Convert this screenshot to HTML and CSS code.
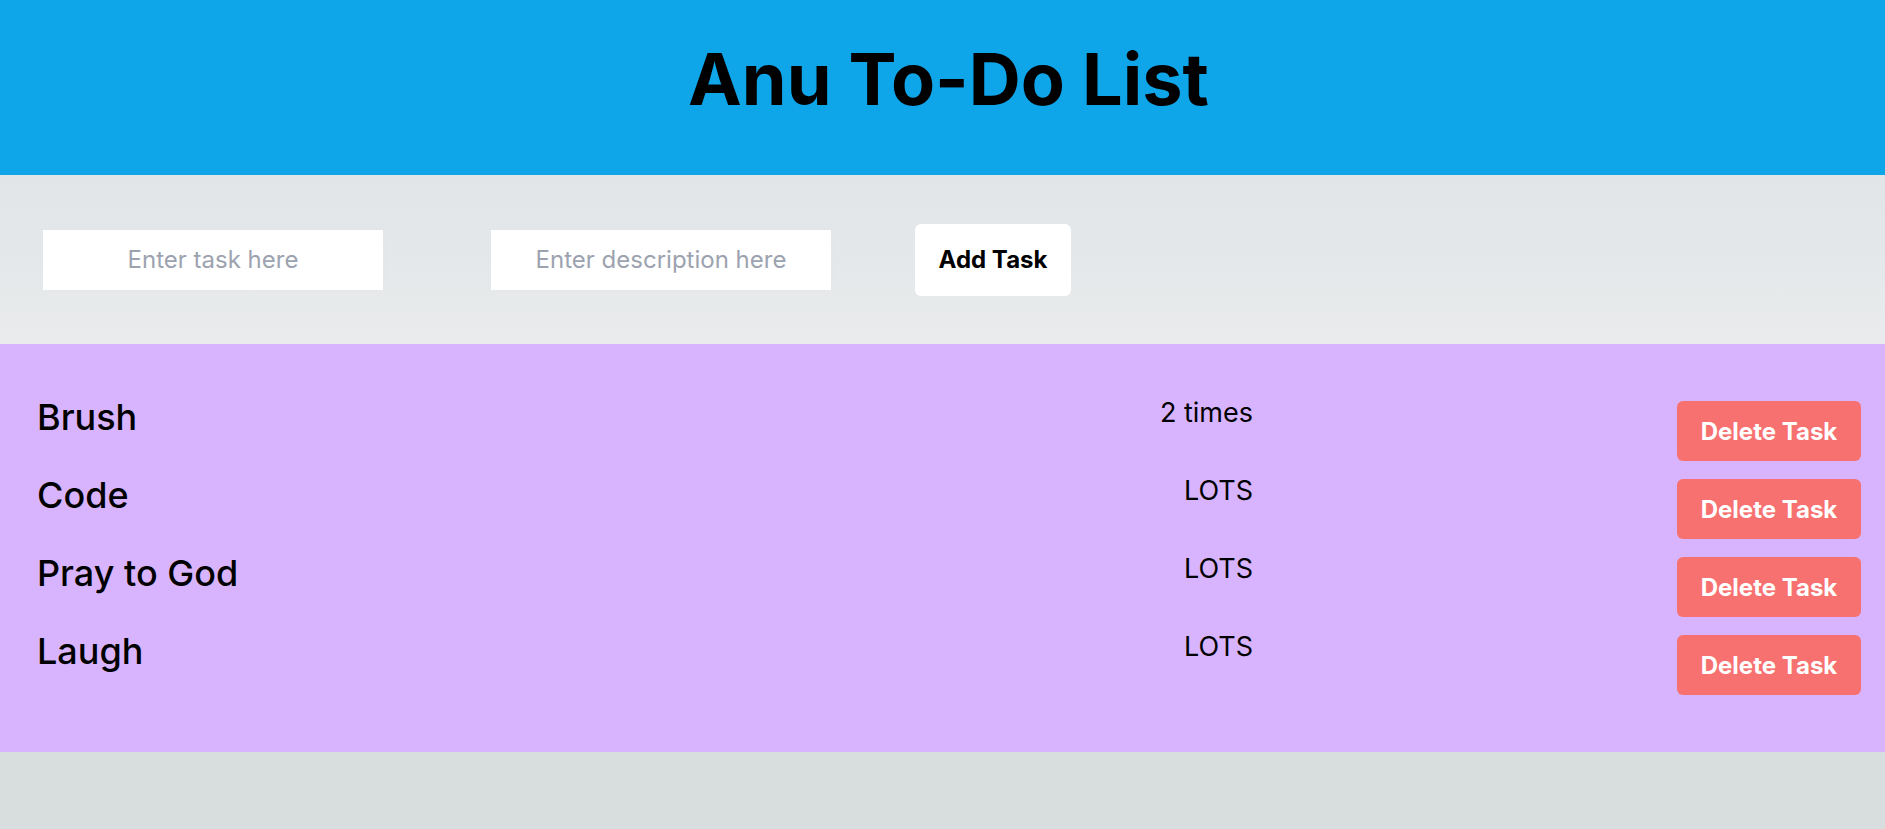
FILE: index.html
```html
<!DOCTYPE html>
<html lang="en">
<head>
<meta charset="utf-8">
<title>Anu To-Do List</title>
<link rel="stylesheet" href="styles.css">
</head>
<body>
<header class="header">
  <h1 class="title">Anu To-Do List</h1>
</header>
<section class="form-bar">
  <input class="field field-task" type="text" placeholder="Enter task here">
  <input class="field field-desc" type="text" placeholder="Enter description here">
  <button class="add-btn" type="button">Add Task</button>
</section>
<section class="list">
  <div class="row">
    <div class="task-title">Brush</div>
    <div class="task-desc">2 times</div>
    <div class="task-action"><button class="del-btn" type="button">Delete Task</button></div>
  </div>
  <div class="row">
    <div class="task-title">Code</div>
    <div class="task-desc">LOTS</div>
    <div class="task-action"><button class="del-btn" type="button">Delete Task</button></div>
  </div>
  <div class="row">
    <div class="task-title">Pray to God</div>
    <div class="task-desc">LOTS</div>
    <div class="task-action"><button class="del-btn" type="button">Delete Task</button></div>
  </div>
  <div class="row">
    <div class="task-title">Laugh</div>
    <div class="task-desc">LOTS</div>
    <div class="task-action"><button class="del-btn" type="button">Delete Task</button></div>
  </div>
</section>
</body>
</html>
```
FILE: styles.css
```css
* { box-sizing: border-box; }
html, body {
  margin: 0;
  padding: 0;
}
body {
  font-family: Inter, "Noto Sans", sans-serif;
  background: #d8dddd;
  color: #000;
  min-height: 829px;
}
.header {
  background: #0ea5e9;
  height: 175px;
  padding-top: 43px;
  padding-left: 12px;
}
.title {
  margin: 0;
  text-align: center;
  font-size: 72px;
  line-height: 72px;
  font-weight: 700;
}
.form-bar {
  height: 169px;
  display: flex;
  align-items: center;
  padding-left: 43px;
  background: linear-gradient(#e1e5e8, #e9ebec);
}
.field {
  width: 340px;
  height: 60px;
  border: none;
  outline: none;
  background: #fff;
  text-align: center;
  font-family: Inter, sans-serif;
  font-size: 24px;
  color: #111;
  box-shadow: 0 0 8px rgba(0, 0, 0, 0.015);
}
.field::placeholder { color: #9ca3af; }
.field-task { margin-right: 108px; }
.field-desc { margin-right: 84px; }
.add-btn {
  width: 156px;
  height: 72px;
  border: none;
  border-radius: 6px;
  background: #fff;
  font-family: Inter, sans-serif;
  font-size: 24px;
  font-weight: 700;
  color: #000;
  padding: 0;
}
.list {
  background: #d8b4fe;
  padding: 57px 24px 57px 37px;
  display: flex;
  flex-direction: column;
  gap: 18px;
}
.row {
  display: grid;
  grid-template-columns: 1fr 1fr 1fr;
  align-items: start;
  height: 60px;
}
.task-title {
  font-size: 36px;
  font-weight: 500;
  line-height: 30px;
  margin-top: 1px;
}
.task-desc {
  text-align: right;
  font-size: 27px;
  line-height: 23px;
}
.task-action {
  display: flex;
  justify-content: flex-end;
}
.del-btn {
  width: 184px;
  height: 60px;
  border: none;
  border-radius: 6px;
  background: #f87171;
  color: #fff;
  font-family: Inter, sans-serif;
  font-size: 24px;
  font-weight: 700;
  padding: 0;
}
```
